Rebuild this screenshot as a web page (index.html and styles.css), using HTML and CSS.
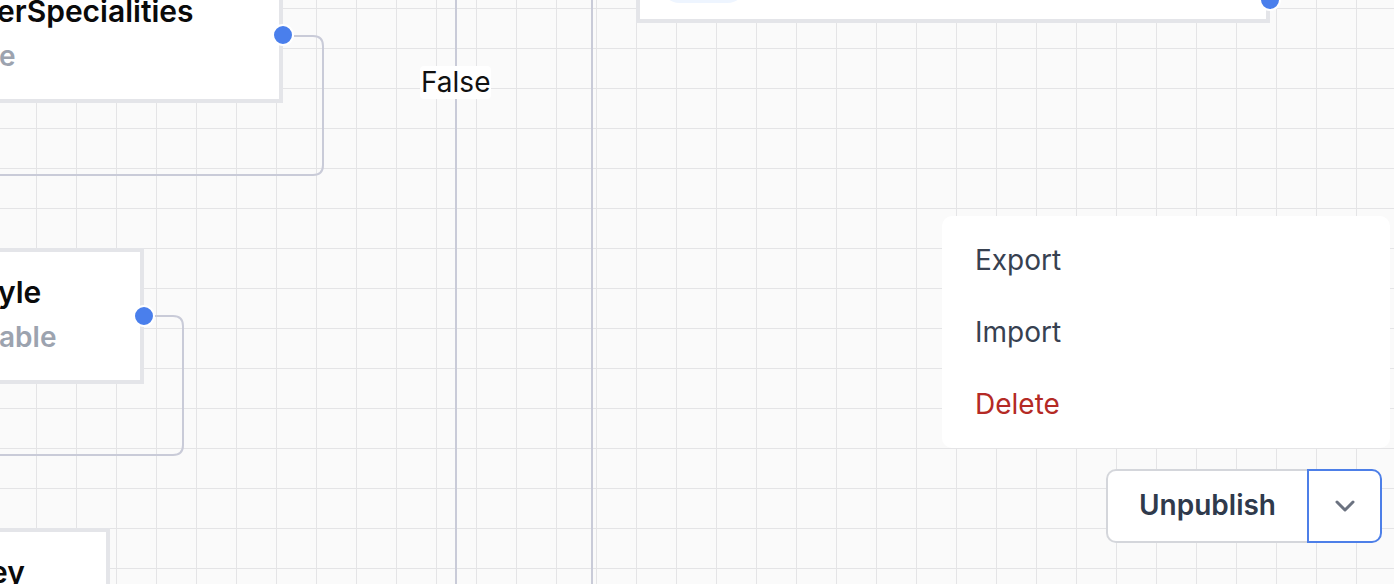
FILE: index.html
```html
<!DOCTYPE html>
<html>
<head>
<meta charset="utf-8">
<link rel="stylesheet" href="styles.css">
</head>
<body>
<div class="canvas">
  <svg class="edges" width="1394" height="584" viewBox="0 0 1394 584">
    <path d="M456 0 V584" />
    <path d="M592 0 V584" />
    <path d="M294 36 H313 Q323 36 323 46 V165 Q323 175 313 175 H0" />
    <path d="M154 316 H173 Q183 316 183 326 V445 Q183 455 173 455 H0" />
  </svg>

  <div class="edge-label label-false">False</div>

  <div class="node node-1">
    <div class="node-title t1">erSpecialities</div>
    <div class="node-sub s1">e</div>
    <span class="handle"></span>
  </div>

  <div class="node node-2">
    <div class="node-title t2">yle</div>
    <div class="node-sub s2">able</div>
    <span class="handle"></span>
  </div>

  <div class="node node-3">
    <div class="node-title t3">ey</div>
  </div>

  <div class="node node-top">
    <span class="pill"></span>
    <span class="handle handle-top"></span>
  </div>

  <div class="menu">
    <div class="menu-item">Export</div>
    <div class="menu-item">Import</div>
    <div class="menu-item danger">Delete</div>
  </div>

  <div class="split-btn">
    <button class="btn-main">Unpublish</button>
    <button class="btn-toggle">
      <svg width="20" height="12" viewBox="0 0 20 12"><path d="M2 2 L10 10 L18 2" /></svg>
    </button>
  </div>
</div>
</body>
</html>
```

FILE: styles.css
```css
* { box-sizing: border-box; }
html, body { margin: 0; padding: 0; }
body { font-family: Inter, "Noto Sans", sans-serif; background: #fafafa; }

.canvas {
  position: relative;
  width: 1394px;
  height: 584px;
  overflow: hidden;
  background-color: #fafafa;
  background-image:
    linear-gradient(to right, #e4e4e6 1px, transparent 1px),
    linear-gradient(to bottom, #e4e4e6 1px, transparent 1px);
  background-size: 40px 40px;
  background-position: 36px 8px;
}

.edges { position: absolute; left: 0; top: 0; }
.edges path { fill: none; stroke: #c9cbd8; stroke-width: 2; }

.edge-label {
  position: absolute;
  background: #fff;
  border-radius: 4px;
  font-size: 28px;
  line-height: 33px;
  color: #111;
  padding: 0 1px;
}
.label-false { left: 420px; top: 66px; }

.node {
  position: absolute;
  background: #fff;
  border: 4px solid #e4e5e9;
  height: 136px;
  padding-top: 19px;
}
.node-title {
  font-size: 30px;
  font-weight: 600;
  color: #0a0a0a;
  line-height: 42px;
  white-space: nowrap;
}
.node-sub {
  margin-top: 3px;
  font-size: 28px;
  font-weight: 600;
  color: #9ca3af;
  line-height: 42px;
  white-space: nowrap;
}
.node-1 { left: -40px; top: -33px; width: 323px; }
.node-2 { left: -40px; top: 248px; width: 184px; }
.node-3 { left: -40px; top: 528px; width: 150px; }
.t1 { margin-left: 33px; }
.s1 { margin-left: 35px; }
.t2 { margin-left: 34px; }
.s2 { margin-left: 35px; }
.t3 { margin-left: 26px; }

.node-top { left: 636px; top: -113px; width: 634px; }
.pill {
  position: absolute;
  left: 20px;
  bottom: 16px;
  width: 87px;
  height: 40px;
  border-radius: 20px;
  background: #eef5ff;
}

.handle {
  position: absolute;
  right: -15px;
  top: 50%;
  width: 22px;
  height: 22px;
  margin-top: -11px;
  border-radius: 50%;
  background: #4a7fec;
  border: 2px solid #fff;
}
.handle-top { top: auto; bottom: 8px; margin-top: 0; }

.menu {
  position: absolute;
  left: 942px;
  top: 216px;
  width: 448px;
  padding: 8px 0;
  background: #fff;
  border-radius: 10px;
}
.menu-item {
  height: 72px;
  display: flex;
  align-items: center;
  padding-left: 33px;
  font-size: 28px;
  color: #374151;
}
.menu-item.danger { color: #b42a25; }

.split-btn {
  position: absolute;
  left: 1106px;
  top: 469px;
  display: flex;
  height: 74px;
}
.split-btn button {
  font-family: Inter, "Noto Sans", sans-serif;
  background: #fff;
  margin: 0;
  height: 74px;
}
.btn-main {
  width: 201px;
  border: 2px solid #d4d6db;
  border-right: none;
  border-radius: 10px 0 0 10px;
  font-size: 28px;
  font-weight: 600;
  color: #2f3a4c;
  padding: 0 0 2px 0;
}
.btn-toggle {
  width: 75px;
  border: 2px solid #4d7fe8;
  border-radius: 0 10px 10px 0;
  display: flex;
  align-items: center;
  justify-content: center;
  padding: 0;
}
.btn-toggle svg path { fill: none; stroke: #6b7280; stroke-width: 3; stroke-linecap: round; stroke-linejoin: round; }
```
